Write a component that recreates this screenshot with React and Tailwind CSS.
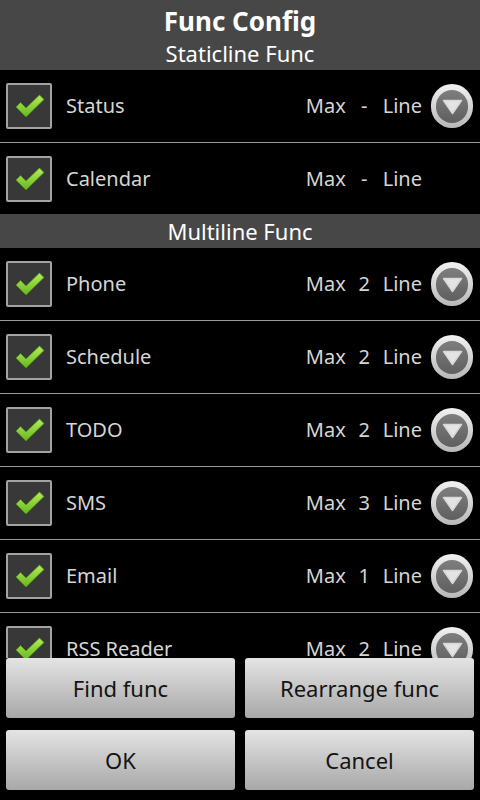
import React from "react";

const staticFuncs = [
  { name: "Status", value: "-", dropdown: true },
  { name: "Calendar", value: "-", dropdown: false },
];

const multiFuncs = [
  { name: "Phone", value: "2" },
  { name: "Schedule", value: "2" },
  { name: "TODO", value: "2" },
  { name: "SMS", value: "3" },
  { name: "Email", value: "1" },
  { name: "RSS Reader", value: "2" },
];

function CheckBox() {
  return (
    <div className="w-[46px] h-[46px] shrink-0 rounded-[2px] border-2 border-[#a3a3a3] bg-[#383838] flex items-center justify-center">
      <svg width="34" height="30" viewBox="0 0 34 30">
        <defs>
          <linearGradient id="chk" x1="0" y1="0" x2="0" y2="1">
            <stop offset="0" stopColor="#b4ee58" />
            <stop offset="1" stopColor="#66b61e" />
          </linearGradient>
        </defs>
        <polygon
          points="4,16 8.5,11.5 14,17 27.5,4 32,8.5 14,26"
          fill="url(#chk)"
          stroke="#4f9216"
          strokeWidth="0.8"
          strokeLinejoin="round"
        />
      </svg>
    </div>
  );
}

function DropButton() {
  return (
    <div className="w-[42px] h-[44px] rounded-full bg-gradient-to-b from-[#f2f2f2] to-[#b8b8b8] flex items-center justify-center shadow-[0_0_1px_#000]">
      <div className="w-[32px] h-[33px] rounded-full bg-gradient-to-b from-[#7e7e7e] to-[#5f5f5f] flex items-center justify-center pt-[1px]">
        <svg width="21" height="16" viewBox="0 0 21 16">
          <polygon points="1.5,1.5 19.5,1.5 10.5,14.5" fill="#e4e4e4" stroke="#d8d8d8" strokeLinejoin="round" strokeWidth="1.5" />
        </svg>
      </div>
    </div>
  );
}

function FuncRow({ name, value, dropdown = true, last = false }) {
  return (
    <div
      className={`shrink-0 flex items-center pl-[6px] pr-[7px] ${
        last ? "h-[71px]" : "h-[73px] border-b border-[#9a9a9a]"
      }`}
    >
      <CheckBox />
      <span className="ml-[14px] flex-1 text-[20px] text-[#d6d6d6]">{name}</span>
      <span className="text-[20px] text-[#d6d6d6]">Max</span>
      <span className="w-[37px] text-center text-[20px] text-[#d6d6d6]">{value}</span>
      <span className="text-[20px] text-[#d6d6d6]">Line</span>
      <div className="ml-[9px] w-[42px] h-[44px]">{dropdown && <DropButton />}</div>
    </div>
  );
}

function SectionHeader({ title, tall = false }) {
  return (
    <div
      className={`shrink-0 bg-[#474747] flex items-center justify-center text-[22px] text-white ${
        tall ? "h-[34px]" : "h-[33px]"
      }`}
    >
      {title}
    </div>
  );
}

function GrayButton({ label }) {
  return (
    <button className="flex-1 h-[60px] rounded-[3px] bg-gradient-to-b from-[#e4e4e4] to-[#a8a8a8] text-[22px] text-[#141414]">
      {label}
    </button>
  );
}

export default function App() {
  return (
    <div
      className="w-[480px] h-[800px] bg-black flex flex-col overflow-hidden"
      style={{ fontFamily: '"Noto Sans", "Open Sans", sans-serif' }}
    >
      {/* scrolling list, clipped by the button bar */}
      <div className="h-[658px] shrink-0 overflow-hidden flex flex-col">
        <div className="h-[37px] shrink-0 bg-[#474747] flex items-end justify-center text-[26px] font-bold text-white leading-none pb-[3px]">
          Func Config
        </div>
        <SectionHeader title="Staticline Func" />
        {staticFuncs.map((f, i) => (
          <FuncRow
            key={f.name}
            name={f.name}
            value={f.value}
            dropdown={f.dropdown}
            last={i === staticFuncs.length - 1}
          />
        ))}
        <SectionHeader title="Multiline Func" tall />
        {multiFuncs.map((f) => (
          <FuncRow key={f.name} name={f.name} value={f.value} />
        ))}
      </div>
      <div className="flex-1 px-[6px] pb-[10px] flex flex-col gap-[12px]">
        <div className="flex gap-[10px]">
          <GrayButton label="Find func" />
          <GrayButton label="Rearrange func" />
        </div>
        <div className="flex gap-[10px]">
          <GrayButton label="OK" />
          <GrayButton label="Cancel" />
        </div>
      </div>
    </div>
  );
}
